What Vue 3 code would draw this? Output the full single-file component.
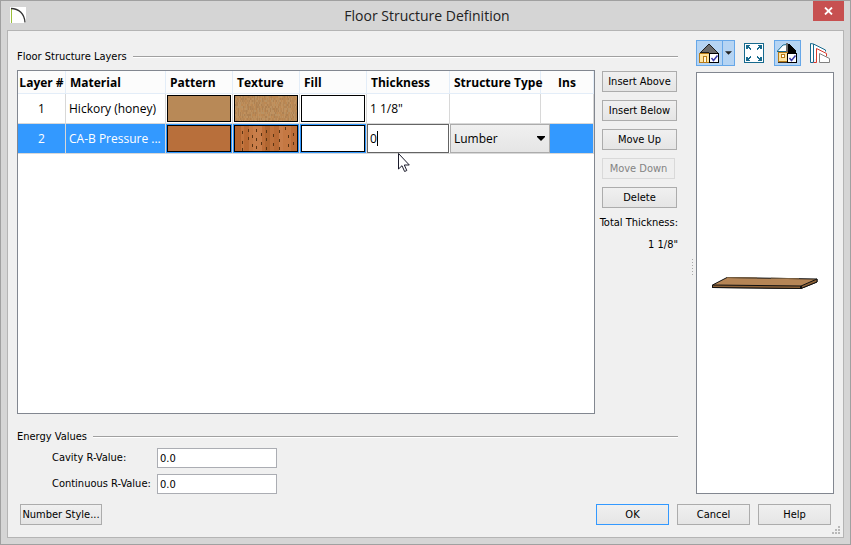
<script setup>
import { ref } from "vue";

const layers = ref([
  { id: 1, material: "Hickory (honey)", color: "#b88957", thickness: '1 1/8"' },
  { id: 2, material: "CA-B Pressure ...", color: "#b86f3b", thickness: "0" },
]);
const selected = ref(2);
const structureType = ref("Lumber");
const cavity = ref("0.0");
const continuous = ref("0.0");

// wood grain for the hickory swatch
const shades = ["#b98a58", "#be8f5b", "#b58655", "#c09260", "#bd8852", "#ae8152", "#b99263"];
const grain = [];
let seed = 7;
for (let x = 0; x < 63; x++) {
  for (let y = 0; y < 25; y += 2) {
    seed = (seed * 16807) % 2147483647;
    grain.push({ x, y, fill: shades[Math.floor(seed / 1000) % shades.length] });
  }
}

// planks and incision marks for the pressure treated swatch
const planks = [
  { x: 0, w: 6, fill: "#b5652f" },
  { x: 6, w: 3, fill: "#c2743e" },
  { x: 9, w: 5, fill: "#b96a34" },
  { x: 14, w: 4, fill: "#c47843" },
  { x: 18, w: 9, fill: "#c97e4a" },
  { x: 27, w: 3, fill: "#bd6e39" },
  { x: 30, w: 6, fill: "#b16631" },
  { x: 36, w: 4, fill: "#be713c" },
  { x: 40, w: 5, fill: "#b86a35" },
  { x: 45, w: 4, fill: "#c87d4a" },
  { x: 49, w: 8, fill: "#c57843" },
  { x: 57, w: 6, fill: "#bc6d38" },
];
const marks = [
  [7, 5], [7, 15], [7, 22], [13, 3], [13, 11], [17, 9], [17, 18], [21, 3], [21, 12], [21, 20],
  [26, 7], [26, 16], [32, 4], [32, 12], [32, 21], [39, 8], [39, 17], [45, 4], [45, 13], [45, 21],
  [51, 1], [54, 9], [54, 18], [59, 7], [59, 16],
];
</script>

<template>
  <div class="window">
    <header class="titlebar">
      <svg class="logo" width="16" height="16" viewBox="0 0 16 16">
        <rect width="16" height="16" fill="#fff" />
        <path d="M1.5 1v15" stroke="#9bbf3b" stroke-width="1" />
        <path d="M1 1.500C9 1.500 14.500 7 15 15.500" fill="none" stroke="#333" stroke-width="1.300" />
      </svg>
      <h1>Floor Structure Definition</h1>
      <button class="close" aria-label="Close">
        <svg width="9" height="8" viewBox="0 0 9 8">
          <path d="M1 .5l7 7M8 .5l-7 7" stroke="#fff" stroke-width="1.800" />
        </svg>
      </button>
    </header>

    <main class="client">
      <div class="content">
        <div class="left">
          <div class="legend"><h2>Floor Structure Layers</h2></div>
          <div class="layers">
            <div class="grid">
              <table>
                <colgroup>
                  <col class="c-num" />
                  <col class="c-mat" />
                  <col class="c-swatch" />
                  <col class="c-swatch" />
                  <col class="c-swatch" />
                  <col class="c-thick" />
                  <col class="c-type" />
                  <col />
                </colgroup>
                <thead>
                  <tr>
                    <th class="center">Layer #</th>
                    <th>Material</th>
                    <th>Pattern</th>
                    <th>Texture</th>
                    <th>Fill</th>
                    <th>Thickness</th>
                    <th>Structure Type</th>
                    <th class="center">Ins</th>
                  </tr>
                </thead>
                <tbody>
                  <tr
                    v-for="layer in layers"
                    :key="layer.id"
                    :class="{ selected: layer.id === selected }"
                    @click="selected = layer.id"
                  >
                    <td class="center">{{ layer.id }}</td>
                    <td>{{ layer.material }}</td>
                    <td class="cell">
                      <div class="swatch" :style="{ background: layer.color }"></div>
                    </td>
                    <td class="cell">
                      <div class="swatch">
                        <svg viewBox="0 0 63 25" preserveAspectRatio="none" shape-rendering="crispEdges">
                          <template v-if="layer.id === 1">
                            <rect v-for="(g, i) in grain" :key="i" :x="g.x" :y="g.y" width="1" height="2" :fill="g.fill" />
                          </template>
                          <template v-else>
                            <rect v-for="p in planks" :key="p.x" :x="p.x" y="0" :width="p.w" height="25" :fill="p.fill" />
                            <rect v-for="(m, i) in marks" :key="'m' + i" :x="m[0]" :y="m[1]" width="1" height="3" fill="#5a3413" />
                          </template>
                        </svg>
                      </div>
                    </td>
                    <td class="cell"><div class="swatch"></div></td>
                    <td v-if="layer.id === 2" class="editing">
                      <input v-model="layer.thickness" class="edit" aria-label="Thickness" />
                      <span class="caret"></span>
                      <svg class="pointer" width="12" height="19" viewBox="0 0 12 19">
                        <path
                          d="M.5 .5v15.500l3.500-3.300 2.600 5.800 2.200-1-2.500-5.500h5z"
                          fill="#fff"
                          stroke="#1b1b2b"
                        />
                      </svg>
                    </td>
                    <td v-else>{{ layer.thickness }}</td>
                    <td v-if="layer.id === 2" class="editing">
                      <select v-model="structureType" aria-label="Structure Type">
                        <option>Lumber</option>
                        <option>Sheet</option>
                      </select>
                      <svg class="arrow" width="8" height="5" viewBox="0 0 8 5">
                        <path d="M0 0h8v1L4 5 0 1z" fill="#000" />
                      </svg>
                    </td>
                    <td v-else></td>
                    <td></td>
                  </tr>
                </tbody>
              </table>
            </div>
            <div class="actions">
              <button class="btn">Insert Above</button>
              <button class="btn">Insert Below</button>
              <button class="btn">Move Up</button>
              <button class="btn down" disabled>Move Down</button>
              <button class="btn">Delete</button>
              <p>Total Thickness:</p>
              <p>1 1/8"</p>
            </div>
          </div>
          <div class="legend energy"><h2>Energy Values</h2></div>
          <div class="fields">
            <label for="cavity">Cavity R-Value:</label>
            <input id="cavity" v-model="cavity" />
            <label for="continuous">Continuous R-Value:</label>
            <input id="continuous" v-model="continuous" />
          </div>
        </div>

        <div class="splitter"><i v-for="n in 6" :key="n"></i></div>

        <aside class="right">
          <div class="toolbar">
            <div class="split">
              <button class="tool on" aria-label="Color">
                <svg width="20" height="20" viewBox="0 0 20 20" shape-rendering="crispEdges">
                  <path d="M0 10h1v-1h1v-1h1v-1h1v-1h1v-1h1v-1h1v-1h1v-1h1v-1h2v1h1v1h1v1h1v1h1v1h1v1h1v1h1v1h1v1h1v1z" fill="#1c1c1c" />
                  <path d="M2 9h1v-1h1v-1h1v-1h1v-1h1v-1h1v-1h1v-1h2v1h1v1h1v1h1v1h1v1h1v1h1v1h1v1z" fill="#6b6b6b" />
                  <rect x=".5" y="10.500" width="10" height="9" fill="#fde3a0" stroke="#b87b16" />
                  <path d="M4.500 19v-6h3v6" fill="#fff8e0" stroke="#b87b16" />
                  <rect x="10.500" y="10.500" width="9" height="9" fill="#fff" stroke="#000" />
                  <path d="M12.500 15l2 2.500 4-5" fill="none" stroke="#3a3aa8" stroke-width="1.500" shape-rendering="auto" />
                </svg>
              </button>
              <button class="tool on more" aria-label="Color options">
                <svg width="8" height="4" viewBox="0 0 8 4"><path d="M0 0h8L4 4z" fill="#222" /></svg>
              </button>
            </div>
            <button class="tool" aria-label="Fill window">
              <svg width="20" height="20" viewBox="0 0 20 20" shape-rendering="crispEdges">
                <rect x=".5" y=".5" width="19" height="19" fill="#fff" stroke="#176a8e" />
                <path d="M2 2h4v1H5v1h1v1h1v2H6V6H5V5H4v1H2zM18 2h-4v1h1v1h-1v1h-1v2h1V6h1V5h1v1h2zM2 18h4v-1H5v-1h1v-1h1v-2H6v1H5v1H4v-1H2zM18 18h-4v-1h1v-1h-1v-1h-1v-2h1v1h1v1h1v-1h2z" fill="#176a8e" />
              </svg>
            </button>
            <button class="tool on" aria-label="Toggle textures">
              <svg width="20" height="20" viewBox="0 0 20 20" shape-rendering="crispEdges">
                <path d="M0 8.500L6 2h4v7H0z" fill="#fff" />
                <path d="M0 8.500h9M.5 8L6 2l4-.5" fill="none" stroke="#176a8e" shape-rendering="auto" />
                <path d="M10 1h3l6 7v2h-9z" fill="#000" />
                <rect x="9" y="0" width="2" height="10" fill="#6b6b6b" />
                <rect x="1.500" y="9.500" width="9" height="9" fill="#fde3a0" stroke="#b87b16" />
                <rect x="4.500" y="11.500" width="3" height="3" fill="#fff" stroke="#b87b16" />
                <path d="M1 19.500h10" stroke="#333" />
                <rect x="10.500" y="10.500" width="9" height="9" fill="#fff" stroke="#000" />
                <path d="M12.500 15l2 2.500 4-5" fill="none" stroke="#3a3aa8" stroke-width="1.500" shape-rendering="auto" />
              </svg>
            </button>
            <button class="tool" aria-label="Cross section">
              <svg width="20" height="20" viewBox="0 0 20 20" fill="none">
                <path d="M.5 19.500V.5l3 .5 12 6v1.500" fill="#fff" stroke="#176a8e" />
                <path d="M3.500 1v18.500M.5 19.500h3" stroke="#176a8e" />
                <path d="M6.500 19.500v-14l10 5v3" fill="#fff" stroke="#d8392c" />
                <path d="M3.500 19.500h3" stroke="#d8392c" />
                <path d="M9.500 19.500V10.500l10 5v4z" fill="#fff" stroke="#808080" />
              </svg>
            </button>
          </div>
          <div class="preview">
            <svg width="108" height="14" viewBox="0 0 108 14">
              <path d="M1.500 9L16 1.500l90 1.500v3L90 12.500 1.500 11.500z" fill="#b58556" stroke="#111" />
              <path d="M1.500 9L90 10l16-7v3L90 12.500 1.500 11.500z" fill="#8d6238" stroke="#111" />
              <path d="M90 10v2.500" stroke="#111" stroke-width="2" />
              <path d="M16 1.500l30 .5M60 2.200l28 .5" stroke="#7d6242" />
            </svg>
          </div>
        </aside>
      </div>

      <footer>
        <button class="btn number">Number Style...</button>
        <button class="btn default">OK</button>
        <button class="btn">Cancel</button>
        <button class="btn">Help</button>
      </footer>
      <svg class="grip" width="8" height="8" viewBox="0 0 8 8">
        <path d="M6 0h2v2H6zM3 3h2v2H3zM6 3h2v2H6zM0 6h2v2H0zM3 6h2v2H3zM6 6h2v2H6z" fill="#b8b8b8" />
      </svg>
    </main>
  </div>
</template>

<style>
body {
  margin: 0;
}
</style>

<style scoped>
* {
  box-sizing: border-box;
}

.window {
  display: flex;
  flex-direction: column;
  min-height: 100vh;
  padding: 0 6px 6px;
  background: #d5d5d5;
  border: 1px solid #a0a0a0;
  font-family: "DejaVu Sans Condensed", "Noto Sans", sans-serif;
  font-size: 11px;
  line-height: 16px;
  color: #000;
}

h1,
h2,
p {
  margin: 0;
  font-weight: normal;
}

button,
input,
select {
  margin: 0;
  font: inherit;
  color: inherit;
}

/* title bar */
.titlebar {
  display: grid;
  grid-template-columns: 34px 1fr 31px;
  height: 29px;
}

.logo {
  margin: 6px 3px;
}

h1 {
  text-align: center;
  font-family: "Open Sans", sans-serif;
  font-size: 14px;
  line-height: 30px;
  color: #222;
}

.close {
  display: flex;
  align-items: center;
  justify-content: center;
  height: 20px;
  padding: 0;
  border: none;
  background: #c75050;
}

/* dialog body */
.client {
  position: relative;
  flex: 1;
  display: flex;
  flex-direction: column;
  padding: 9px 9px 12px;
  background: #f0f0f0;
  border: 1px solid #b4b4b4;
}

.content {
  flex: 1;
  display: flex;
}

.left {
  flex: 1;
  display: flex;
  flex-direction: column;
}

.legend {
  display: flex;
  align-items: center;
  gap: 6px;
  height: 30px;
  padding-top: 4px;
}

.legend::after {
  content: "";
  flex: 1;
  height: 1px;
  background: #a0a0a0;
  border-bottom: 1px solid #fff;
}

.legend h2 {
  font-size: 11px;
}

.energy {
  height: 34px;
  padding-top: 12px;
}

.layers {
  flex: 1;
  display: flex;
  gap: 7px;
}

.grid {
  flex: 1;
  background: #fff;
  border: 1px solid #828790;
}

table {
  width: 100%;
  table-layout: fixed;
  border-spacing: 0;
  font-family: "Open Sans", sans-serif;
  font-size: 12px;
}

.c-num {
  width: 48px;
}

.c-mat {
  width: 100px;
}

.c-swatch {
  width: 67px;
}

.c-thick {
  width: 83px;
}

.c-type {
  width: 91px;
}

th {
  height: 23px;
  padding: 2px 0 0 4px;
  text-align: left;
  white-space: nowrap;
  background: #fcfcfc;
  border-right: 1px solid #e3edf8;
  border-bottom: 1px solid #e3edf8;
}

td {
  height: 30px;
  padding: 0 0 0 3px;
  white-space: nowrap;
  border-right: 1px solid #d8d8d8;
  border-bottom: 1px solid #d8d8d8;
}

.center {
  padding-left: 0;
  text-align: center;
}

.selected td {
  background: #3399ff;
  color: #fff;
}

td.cell {
  padding: 1px;
}

.swatch {
  height: 27px;
  border: 1px solid #000;
  background: #fff;
}

.swatch svg {
  display: block;
  width: 100%;
  height: 100%;
}

.selected .editing {
  position: relative;
  padding: 0;
  border-right: none;
  background: #fff;
  color: #000;
}

.edit {
  display: block;
  width: calc(100% - 1px);
  height: 29px;
  padding: 0 2px;
  border: 1px solid #646464;
  border-radius: 0;
  outline: none;
  background: #fff;
}

.caret {
  position: absolute;
  left: 10px;
  top: 7px;
  width: 1px;
  height: 15px;
  background: #000;
}

.pointer {
  position: absolute;
  left: 31px;
  top: 29px;
}

select {
  position: absolute;
  left: 0;
  top: 0;
  width: calc(100% + 9px);
  height: 29px;
  padding: 0 3px;
  appearance: none;
  border: 1px solid #acacac;
  border-radius: 0;
  background: linear-gradient(#f0f0f0, #e5e5e5);
  z-index: 1;
}

.arrow {
  position: absolute;
  right: -4px;
  top: 12px;
  z-index: 2;
  pointer-events: none;
}

/* push buttons */
.btn {
  width: 73px;
  height: 21px;
  padding: 0;
  white-space: nowrap;
  border: 1px solid #acacac;
  background: linear-gradient(#f0f0f0, #e5e5e5);
}

.btn:disabled {
  color: #838383;
  border-color: #d9d9d9;
  background: #efefef;
}

.default {
  border-color: #3399ff;
}

.actions {
  display: flex;
  flex-direction: column;
  gap: 8px;
  width: 76px;
  padding-top: 1px;
}

.actions .btn {
  width: 75px;
}

.actions .down {
  width: 73px;
}

.actions p {
  display: flex;
  justify-content: flex-end;
  line-height: 14px;
  white-space: nowrap;
}

.fields {
  display: grid;
  grid-template-columns: 105px 120px;
  gap: 6px 0;
  align-items: center;
  padding-left: 35px;
}

.fields input {
  width: 120px;
  height: 20px;
  padding: 0 2px;
  border: 1px solid #abadb3;
  border-radius: 0;
  background: #fff;
}

/* preview pane */
.splitter {
  display: flex;
  flex-direction: column;
  justify-content: center;
  align-items: center;
  gap: 2px;
  width: 18px;
  padding-left: 11px;
}

.splitter i {
  width: 1px;
  height: 1px;
  background: #a8a8a8;
}

.right {
  display: flex;
  flex-direction: column;
  gap: 6px;
  width: 138px;
}

.toolbar {
  display: flex;
  justify-content: space-between;
}

.split {
  display: flex;
}

.tool {
  display: flex;
  align-items: center;
  width: 27px;
  height: 26px;
  padding: 0 2px;
  border: 1px solid transparent;
  background: none;
}

.tool.on {
  border-color: #66a7e8;
  background: #b5d4f3;
}

.tool.more {
  width: 12px;
  border-left: none;
}

.preview {
  flex: 1;
  display: flex;
  align-items: center;
  justify-content: center;
  background: #fff;
  border: 1px solid #828790;
}

footer {
  display: flex;
  gap: 8px;
  padding: 10px 3px 0;
}

.number {
  width: 82px;
  margin-right: auto;
}

.grip {
  position: absolute;
  right: 3px;
  bottom: 3px;
}
</style>
